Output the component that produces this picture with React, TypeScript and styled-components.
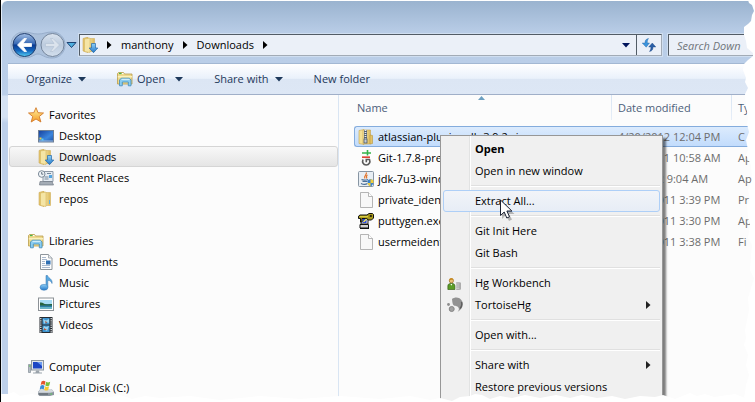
import React from 'react';
import styled, { createGlobalStyle, css } from 'styled-components';

const GlobalStyle = createGlobalStyle`
  * { box-sizing: border-box; }
  html, body { margin: 0; background: #fff; }
  body, button, input, table {
    font-family: "Open Sans", "Noto Sans", sans-serif;
    font-size: 11px;
    line-height: 16px;
  }
  button { border: 0; background: none; padding: 0; margin: 0; color: inherit; text-align: left; }
  svg { display: block; flex: none; }
`;

/* ---------- layout ---------- */

const Screen = styled.div`
  position: relative;
  height: 100vh;
  overflow: hidden;
  padding-top: 1px;
  border-left: 1px solid #000;
`;

const Frame = styled.div`
  display: flex;
  flex-direction: column;
  height: 100%;
  padding-left: 6px;
  border-top-left-radius: 6px;
  border-left: 1px solid #e3edf8;
  background: linear-gradient(#9ab3cf 0, #b9cde7 32px, #bbcfe9 94px, #d5e2f3 95px, #d5e2f3 116px, #bdd0ea 122px);
`;

const NavBar = styled.div`
  display: flex;
  align-items: center;
  padding: 30px 0 4px 2px;
`;

const RoundButtons = styled.div`
  display: flex;
  align-items: center;
  width: 68px;
`;

const PlainButton = styled.button`
  display: flex;
  align-items: center;
  justify-content: center;
`;

const AddressBar = styled.div`
  flex: 1;
  display: flex;
  align-items: center;
  height: 22px;
  margin-left: 1px;
  background: #ebf0f8;
  border: 1px solid #a2abb6;
  border-top-color: #525c66;
  border-left-color: #525c66;
  box-shadow: 0 0 0 1px #cfdef0;
`;

const Crumbs = styled.nav`
  flex: 1;
  display: flex;
  align-items: center;
  gap: 9px;
  padding-left: 2px;
  color: #000;
`;

const Crumb = styled.a`
  color: inherit;
  text-decoration: none;
`;

const Dropdown = styled(PlainButton)`
  width: 20px;
  height: 20px;
`;

const Refresh = styled(PlainButton)`
  width: 25px;
  height: 20px;
  border-left: 1px solid #525c66;
`;

const SearchBox = styled.input`
  width: 87px;
  height: 22px;
  margin-left: 6px;
  padding: 0 0 0 8px;
  border: 1px solid #a2abb6;
  border-top-color: #525c66;
  border-left-color: #525c66;
  border-right: 0;
  border-radius: 0;
  box-shadow: 0 0 0 1px #cfdef0;
  background: #ebf0f8;
  font-style: italic;
  outline: none;
  &::placeholder { color: #6f747a; opacity: 1; }
`;

const Toolbar = styled.div`
  display: flex;
  align-items: center;
  height: 32px;
  padding-left: 18px;
  gap: 31px;
  color: #1e395b;
  border-top: 1px solid #a3b8d3;
  border-bottom: 1px solid #a0afc8;
  background: linear-gradient(#ffffff, #eaf1fb 48%, #dce6f4 50%, #dde7f5);
`;

const ToolButton = styled.button<{ $gap?: number }>`
  display: flex;
  align-items: center;
  gap: ${p => p.$gap ?? 6}px;
  height: 24px;
`;

const ToolLabel = styled.span`
  display: flex;
  align-items: center;
  gap: 4px;
`;

const Body = styled.div`
  flex: 1;
  display: flex;
  min-height: 0;
  background: #fcfcfc;
`;

const Sidebar = styled.nav`
  width: 331px;
  flex: none;
  display: flex;
  flex-direction: column;
  gap: 21px;
  padding-top: 9px;
  border-right: 1px solid #d9e5f3;
  overflow: hidden;
`;

const Group = styled.div`
  display: flex;
  flex-direction: column;
`;

const sideRow = css`
  display: flex;
  align-items: center;
  gap: 5px;
  height: 21px;
  color: #000;
  text-decoration: none;
`;

const GroupLink = styled.a`
  ${sideRow}
  padding-left: 20px;
`;

const SideLink = styled.a<{ $selected?: boolean }>`
  ${sideRow}
  margin-left: 1px;
  padding-left: 28px;
  border: 1px solid transparent;
  border-radius: 3px;
  ${p => p.$selected && css`
    border-color: #d5d5d5;
    background: linear-gradient(#f8f8f8, #e5e5e5);
  `}
`;

const Files = styled.main`
  flex: 1;
  min-width: 0;
  padding-left: 15px;
  overflow: hidden;
`;

const Table = styled.table`
  width: 100%;
  table-layout: fixed;
  border-collapse: separate;
  border-spacing: 0;
`;

const HeadCell = styled.th<{ $width?: number; $indent: number }>`
  width: ${p => (p.$width ? `${p.$width}px` : 'auto')};
  height: 31px;
  padding: 0 0 5px ${p => p.$indent}px;
  font-weight: 400;
  text-align: left;
  color: #4c607a;
  background: ${p =>
    p.$width ? 'linear-gradient(#d9e5f3, #e6eef8) 0 0 / 1px 25px no-repeat' : 'none'};
`;

const Row = styled.tr<{ $selected?: boolean }>`
  td {
    height: 21px;
    border: 1px solid transparent;
    border-width: 1px 0;
    ${p => p.$selected && css`
      border-color: #84acdd;
      background: linear-gradient(#dcebfd, #c2dcfc);
    `}
  }
  td:first-child {
    ${p => p.$selected && css`
      border-left: 1px solid #84acdd;
      border-radius: 3px 0 0 3px;
      padding-left: 3px;
    `}
  }
`;

const NameCell = styled.td`
  padding: 0 0 0 4px;
  color: #000;
  white-space: nowrap;
`;

const FileName = styled.div`
  display: flex;
  align-items: center;
  gap: 4px;
`;

const InfoCell = styled.td`
  padding: 0 0 0 7px;
  color: #6d6d6d;
  white-space: nowrap;
`;

/* ---------- overlays ---------- */

const SortMark = styled.div`
  position: absolute;
  left: 477px;
  top: 96px;
`;

const Menu = styled.div`
  position: absolute;
  left: 439px;
  top: 135px;
  width: 223px;
  padding: 2px 2px 20px;
  border: 1px solid #979797;
  background: linear-gradient(to right, #f0f0f0 28px, #e2e3e3 28px, #e2e3e3 29px, #fff 29px, #fff 30px, #f0f0f0 30px);
  box-shadow: 3px 3px 2px rgba(0, 0, 0, 0.5);
`;

const MenuItem = styled.button<{ $strong?: boolean; $hot?: boolean }>`
  display: flex;
  align-items: center;
  width: 100%;
  height: 22px;
  padding-right: 8px;
  border: 1px solid transparent;
  border-radius: 3px;
  color: #000;
  font-weight: ${p => (p.$strong ? 700 : 400)};
  ${p => p.$hot && css`
    border-color: #aecff7;
    background: linear-gradient(#f2f4f8, #e7edf6);
  `}
`;

const MenuIcon = styled.span`
  width: 31px;
  padding-left: 3px;
`;

const MenuLabel = styled.span`
  flex: 1;
`;

const Separator = styled.div`
  height: 8px;
  margin-left: 28px;
  background: linear-gradient(#e0e0e0, #e0e0e0) 0 3px / 100% 1px no-repeat,
    linear-gradient(#fff, #fff) 0 4px / 100% 1px no-repeat;
`;

const Pointer = styled.div`
  position: absolute;
  left: 498px;
  top: 199px;
`;

const TornRight = styled.div`
  position: absolute;
  top: 0;
  right: 0;
  pointer-events: none;
`;

const TornBottom = styled.div`
  position: absolute;
  bottom: 0;
  left: -1px;
  pointer-events: none;
`;

/* ---------- drawings ---------- */

const DefsSvg = styled.svg`
  position: absolute;
`;

const Icon = ({ children, size = 16 }: { children: React.ReactNode; size?: number }) => (
  <svg width={size} height={size} viewBox="0 0 16 16" aria-hidden="true">{children}</svg>
);

const Caret = ({ color = '#1e395b' }: { color?: string }) => (
  <svg width="8" height="5" viewBox="0 0 8 5" aria-hidden="true"><path d="M0 0h8L4 4.500z" fill={color} /></svg>
);

const RightMark = ({ color = '#000' }: { color?: string }) => (
  <svg width="5" height="8" viewBox="0 0 5 8" aria-hidden="true"><path d="M0 0v8l4.500-4z" fill={color} /></svg>
);

const Gradients = () => (
  <DefsSvg width="0" height="0" aria-hidden="true">
    <defs>
      <linearGradient id="folder" x1="0" x2="1"><stop offset="0" stopColor="#f7e7a6" /><stop offset="1" stopColor="#dcb95c" /></linearGradient>
      <linearGradient id="blue" x1="0" y1="0" x2="0" y2="1"><stop offset="0" stopColor="#8fd0f8" /><stop offset="1" stopColor="#2277c8" /></linearGradient>
      <linearGradient id="screen" x1="0" y1="0" x2="1" y2="1"><stop offset="0" stopColor="#163f9c" /><stop offset=".6" stopColor="#3b86dd" /><stop offset="1" stopColor="#1c4fa5" /></linearGradient>
      <linearGradient id="star" x1="0" y1="0" x2="0" y2="1"><stop offset="0" stopColor="#fff3a0" /><stop offset="1" stopColor="#f59a24" /></linearGradient>
      <linearGradient id="back" x1="0" y1="0" x2="0" y2="1"><stop offset="0" stopColor="#a3bfe4" /><stop offset=".45" stopColor="#3768b4" /><stop offset=".5" stopColor="#0a3a92" /><stop offset=".75" stopColor="#1466bd" /><stop offset="1" stopColor="#58d2f5" /></linearGradient>
      <linearGradient id="fwd" x1="0" y1="0" x2="0" y2="1"><stop offset="0" stopColor="#dbe4ef" /><stop offset=".5" stopColor="#bccbde" /><stop offset="1" stopColor="#d3dfed" /></linearGradient>
    </defs>
  </DefsSvg>
);

const NavButtonsArt = () => (
  <svg width="56" height="28" viewBox="0 0 56 28" aria-hidden="true">
    <path d="M14 1c6 0 8 2 14 2s8-2 14-2c8 0 13 6 13 13s-5 13-13 13-10-4-14-4-6 4-14 4S1 21 1 14 6 1 14 1z" fill="#a8bdd8" opacity=".75" stroke="#8ea5c3" />
    <circle cx="14.500" cy="14" r="11.500" fill="url(#back)" stroke="#233f70" />
    <path d="M7.500 14L14 7.500h2.500L13 12.500h8.500v3H13l3.500 5H14z" fill="#fff" stroke="#fff" strokeWidth=".8" strokeLinejoin="round" />
    <circle cx="42.500" cy="14" r="11.500" fill="url(#fwd)" stroke="#74859c" />
    <path d="M49.500 14L43 7.500h-2.500l3.500 5h-8.500v3H44l-3.500 5H43z" fill="#dbe3ed" stroke="#b0bfd1" strokeWidth=".6" />
  </svg>
);

const FolderBase = () => (
  <>
    <path d="M1 1.500L6 0v15.500L1 14z" fill="#e5c873" stroke="#c49f46" strokeWidth=".5" />
    <path d="M6 1.500h6.500V14.500H6z" fill="url(#folder)" stroke="#cda94e" strokeWidth=".5" />
    <path d="M2.500 2L8 1v14.500l-5.500-1z" fill="#f5e5a5" stroke="#d0ae55" strokeWidth=".5" />
  </>
);

const DownloadsIcon = () => (
  <Icon><FolderBase /><path d="M9.500 6.500h4V11H15.800L11.500 15.700 7.200 11H9.500z" fill="url(#blue)" stroke="#2467a8" strokeWidth=".7" /></Icon>
);
const FolderIcon = () => (
  <Icon><FolderBase /><path d="M11.500 9v4" stroke="#5db2e8" strokeWidth="1" /></Icon>
);
const ZipIcon = () => (
  <Icon>
    <path d="M1 1.500L6 .5v15L1 14.500z" fill="#f3df94" stroke="#c9a54c" strokeWidth=".6" />
    <path d="M5 1h7.500v14H5z" fill="url(#folder)" stroke="#c9a54c" strokeWidth=".6" />
    <path d="M12 6l2.500.5v8L12 15z" fill="#e3c468" stroke="#b8933c" strokeWidth=".6" />
    <path d="M7.500 1v9" stroke="#56606c" strokeWidth="3" />
    <path d="M7.500 1v9" stroke="#e9eef4" strokeWidth="1.800" strokeDasharray="1 1" />
    <rect x="6" y="10" width="3" height="4" fill="#c3ccd6" stroke="#4c5664" strokeWidth=".8" />
  </Icon>
);
const StarIcon = () => (
  <Icon><path d="M8 .7l2 5 5.500.3-4.200 3.500 1.600 5.500L8 12l-4.800 3 1.500-5.500L.5 6l5.300-.3z" fill="url(#star)" stroke="#d37a2a" strokeWidth=".9" /></Icon>
);
const DesktopIcon = () => (
  <Icon>
    <rect x=".5" y="2.500" width="15" height="11.500" fill="url(#screen)" stroke="#6f7f94" />
    <path d="M1 12.500h14v1H1z" fill="#a4bdd8" />
    <path d="M1.500 9.500h2v2h-2z" fill="#e9cf4b" /><path d="M3.500 10.500h2v2h-2z" fill="#5ec8f2" />
  </Icon>
);
const RecentIcon = () => (
  <Icon>
    <path d="M5 1.500h10v10H5z" fill="#e5ecf3" stroke="#8d99a6" />
    <path d="M6.500 7h4M6.500 9h4M9 3.500h4" stroke="#77899b" />
    <path d="M11 5h3v3h-3z" fill="#55a5df" />
    <path d="M2 11.500h12l1.500 3.500h-14z" fill="#a4acb5" stroke="#747d86" strokeWidth=".7" />
    <circle cx="3.700" cy="4" r="3.300" fill="#edf2f6" stroke="#7d8b99" />
    <path d="M3.700 2v2.200h1.600" fill="none" stroke="#48596a" strokeWidth=".8" />
  </Icon>
);
const LibraryIcon = () => (
  <Icon>
    <path d="M.5 2.500l1-1h5l1 1.500h7.500v10H.5z" fill="#eed98c" stroke="#b99d4b" strokeWidth=".8" />
    <path d="M2 2.500h2.500" stroke="#45b649" strokeWidth="1.200" /><path d="M5 2.500h1.500" stroke="#fff" />
    <path d="M.8 5h14.400v1.500H.8z" fill="#fbf1bb" />
    <path d="M2.500 14.800V9l1.800-1.800h8L14 9v5.800h-2.700V11H5.300v3.800z" fill="#8bcdf0" stroke="#3e8abc" strokeWidth=".8" />
    <path d="M4.500 8.300h8" stroke="#dff4fd" />
  </Icon>
);
const DocumentsIcon = () => (
  <Icon>
    <path d="M2.500.5h8L14 4v11.500H2.500z" fill="#fdfdfd" stroke="#8f969c" />
    <path d="M10.500.5V4H14" fill="#e8ebee" stroke="#9aa1a8" strokeWidth=".8" />
    <path d="M4 3.500h4M4 5.500h5M4 7.500h3M4 9.500h3M4 11.500h8M4 13.500h8" stroke="#9fb0c6" strokeWidth=".9" /><path d="M8 6.500h4.500v4H8z" fill="#2f6fb3" />
  </Icon>
);
const PageIcon = () => (
  <Icon><path d="M2.500.5h8L14.500 4.500v11h-12z" fill="#f8f8f8" stroke="#a3a3a3" strokeWidth=".8" /><path d="M10.500.5v4h4" fill="#fff" stroke="#a3a3a3" strokeWidth=".8" /></Icon>
);
const MusicIcon = () => (
  <Icon>
    <path d="M8 .5h1.500c.5 2.500 5.500 3.500 4.500 8-.5-2-2-3-4.200-3.200V12H8z" fill="#5aa9e0" stroke="#2e6eaa" strokeWidth=".5" />
    <ellipse cx="6" cy="12.300" rx="4" ry="3" fill="url(#blue)" stroke="#3978b3" strokeWidth=".5" />
  </Icon>
);
const PicturesIcon = () => (
  <Icon>
    <rect x=".5" y="2" width="15" height="12.500" fill="#fff" stroke="#8c9196" />
    <path d="M2 4h12v4H2z" fill="#a7dcf4" /><path d="M2 8h12v5H2z" fill="#2c7ea6" />
    <path d="M2 6.500c3-.5 4 2 7 2s3-.5 5-.5v1.500H2z" fill="#28643c" /><path d="M2 11h12v2H2z" fill="#69b5c6" />
  </Icon>
);
const VideosIcon = () => (
  <Icon>
    <rect x="1.500" y="0" width="13" height="16" fill="#262b30" />
    <path d="M2.800 1v15M13.200 1v15" stroke="#e7ebee" strokeWidth="1.300" strokeDasharray="1.200 1" />
    <path d="M4.500 1h7v6.500h-7zM4.500 8.500h7V15h-7z" fill="#3d93cf" />
    <path d="M5 2l3 1.500L11 2v4L8 5 6 7zM6 9l2 1 3-1-2 5-4-2z" fill="#98d3ef" /><path d="M7 4l2 1-1 2zM6 11l3 2H6z" fill="#b5573b" />
  </Icon>
);
const ComputerIcon = () => (
  <Icon>
    <path d="M.5 5.500h2v8h-2z" fill="#b5bdc5" stroke="#828c95" strokeWidth=".7" /><path d="M1 7h1.500" stroke="#4fbb49" />
    <rect x="3.500" y="1.500" width="12" height="9.500" fill="#dfe4e9" stroke="#8c959e" />
    <path d="M5 3h9v6.500H5z" fill="#1c45c4" /><path d="M9 3h5v4z" fill="#6e9cf0" />
    <path d="M8 11.500h3l.5 2H14v1H5v-1h2.500z" fill="#9aa3ab" />
  </Icon>
);
const DiskIcon = () => (
  <Icon>
    <path d="M2.500 9h11l2.500 3v3L12 16H1.500L0 14.500V12z" fill="#8b959e" /><path d="M2.500 9h11L16 12l-4 .8H0z" fill="#d3d9de" />
    <path d="M1 14h9" stroke="#545d65" /><path d="M12.500 14h1.500" stroke="#58d758" />
    <path d="M3.500 1.500c1.500-1 2.500-1 4 0L6.700 5c-1.500-1-2.500-1-4 0z" fill="#e5552c" />
    <path d="M8.200 1.800c1.500 1 2.500.8 4 0L11.300 5.500c-1.500 1-2.500.8-4 0z" fill="#78bf3d" />
    <path d="M2.500 5.800c1.500-1 2.500-1 4 0l-.8 3.700c-1.500-1-2.500-1-4 0z" fill="#398bd7" />
    <path d="M7.100 6.200c1.500 1 2.500.8 4 0l-.9 3.700c-1.500 1-2.500.8-4 0z" fill="#f8c92f" />
  </Icon>
);
const GitIcon = () => (
  <Icon>
    <path d="M4 3h9M9.500 0v5.500" stroke="#35b34a" strokeWidth="1.600" />
    <path d="M4 7.200h8" stroke="#dc4437" strokeWidth="1.700" />
    <path d="M5 9.500C4 12 5 15 8.200 15s4.300-3 3.300-5.500H8.300v2.700" fill="none" stroke="#5a5a5a" strokeWidth="1.600" />
  </Icon>
);
const JavaIcon = () => (
  <Icon>
    <rect x=".5" y=".5" width="15" height="15" rx="1" fill="#e8eef4" stroke="#8795a3" />
    <path d="M8 1.500c2 2-3 3.500-1 6M9.500 4c-2.500 1.500 0 2-1 3.500" fill="none" stroke="#e27227" strokeWidth="1.200" />
    <path d="M3.500 8.500c1 .8 5 .8 6.500 0M4.500 10.500h5M3 12.500c2 1 5 1 6.500 0" fill="none" stroke="#4a6f96" strokeWidth="1.100" />
    <path d="M12.500 8l3 1.200c0 3-.5 5-3 6.500-2.500-1.500-3-3.500-3-6.500z" fill="#3d83cc" /><path d="M12.500 8l3 1.200V12h-3zM9.500 12h3v3.700C11 15 10 13.500 9.500 12z" fill="#f1cf3d" />
  </Icon>
);
const PuttyIcon = () => (
  <Icon>
    <path d="M3 5h7v6H3z" fill="#e4e4e4" stroke="#111" strokeWidth=".9" />
    <path d="M4.500 6h4v4h-4z" fill="#2444dc" />
    <path d="M2 11.500h8.500V15H2z" fill="#d0d0d0" stroke="#111" />
    <path d="M2 15.500h9" stroke="#111" />
    <path d="M.5 3.200L2 2h7l2-1.500h3.500l1 1V5L13.500 7H10L9 5.500H4V9H2.500V5.500h-2z" fill="#a99a1c" stroke="#111" strokeWidth="1" />
    <path d="M11.800 2.200h2v1.600h-2z" fill="#111" />
    <path d="M2 3.700h8" stroke="#e6da4c" />
    <path d="M5.500 9l3-3" stroke="#fff04a" strokeWidth="1.200" />
  </Icon>
);
const WorkbenchIcon = () => (
  <Icon size={14}>
    <circle cx="5" cy="5.500" r="2.400" fill="#e7c27a" stroke="#9a6a1b" strokeWidth=".8" /><path d="M2.500 5c0-3.500 5-3.500 5 0L6 4z" fill="#c98a20" />
    <path d="M1 15.500V11.500C1 9.500 2 8.500 5 8.500s4 1 4 3v4z" fill="#5b9d26" stroke="#355f14" strokeWidth=".8" /><path d="M4 9l1 2 1-2z" fill="#fff" />
    <path d="M10.500 8h4M10.500 10.300h4M10.500 12.600h4M10.500 15h4M15 7.500v8" stroke="#777" strokeWidth="1" />
  </Icon>
);
const TortoiseIcon = () => (
  <Icon>
    <path d="M5 2c3-2.500 8-2 10 2 1.800 4 .3 8.500-4.500 11 1.500-2 2-3.500.5-5-1.500-1.500-4-.5-5-2.500-.8-2-.8-4-1-5.500z" fill="#929292" />
    <path d="M13 11.500c1.500-1.500 2.200-4 1.500-6.500" fill="none" stroke="#5e5e5e" strokeWidth="1.400" />
    <circle cx="1.500" cy="7.500" r="1.400" fill="#8c8c8c" /><circle cx="4.700" cy="12" r="2.500" fill="#a2a2a2" stroke="#858585" />
  </Icon>
);
const RefreshIcon = () => (
  <svg width="14" height="14" viewBox="0 0 14 14" aria-hidden="true">
    <path d="M6.500.5C3.500 1 3 3 3 5H.2L4.200 9.200 7.500 5H5.300C5.300 3 5.500 2 6.500.5z" fill="#3c94dc" stroke="#245f9f" strokeWidth=".4" />
    <path d="M7.500 13.500C10.500 13 11 11 11 9h2.800L10.300 5 6.700 9h2.200c0 2-.4 3-1.400 4.500z" fill="#295ea6" stroke="#1c4683" strokeWidth=".4" />
  </svg>
);

/* ---------- data ---------- */

type Place = { name: string; icon: React.ReactNode; selected?: boolean };
const groups: { name: string; icon: React.ReactNode; items: Place[] }[] = [
  { name: 'Favorites', icon: <StarIcon />, items: [
    { name: 'Desktop', icon: <DesktopIcon /> },
    { name: 'Downloads', icon: <DownloadsIcon />, selected: true },
    { name: 'Recent Places', icon: <RecentIcon /> },
    { name: 'repos', icon: <FolderIcon /> },
  ] },
  { name: 'Libraries', icon: <LibraryIcon />, items: [
    { name: 'Documents', icon: <DocumentsIcon /> },
    { name: 'Music', icon: <MusicIcon /> },
    { name: 'Pictures', icon: <PicturesIcon /> },
    { name: 'Videos', icon: <VideosIcon /> },
  ] },
  { name: 'Computer', icon: <ComputerIcon />, items: [
    { name: 'Local Disk (C:)', icon: <DiskIcon /> },
  ] },
];

const files = [
  { name: 'atlassian-plugin-sdk-3.9.2.zip', date: '4/20/2012 12:04 PM', type: 'C', icon: <ZipIcon />, selected: true },
  { name: 'Git-1.7.8-preview.exe', date: '12/6/2011 10:58 AM', type: 'Ap', icon: <GitIcon /> },
  { name: 'jdk-7u3-windows.exe', date: '4/3/2012 9:04 AM', type: 'Ap', icon: <JavaIcon /> },
  { name: 'private_identity', date: '11/18/2011 3:39 PM', type: 'Pr', icon: <PageIcon /> },
  { name: 'puttygen.exe', date: '11/18/2011 3:30 PM', type: 'Ap', icon: <PuttyIcon /> },
  { name: 'usermeidentity', date: '11/18/2011 3:38 PM', type: 'Fi', icon: <PageIcon /> },
];

type Entry = { label: string; strong?: boolean; hot?: boolean; icon?: React.ReactNode; sub?: boolean };
const menu: Entry[][] = [
  [{ label: 'Open', strong: true }, { label: 'Open in new window' }],
  [{ label: 'Extract All...', hot: true }],
  [{ label: 'Git Init Here' }, { label: 'Git Bash' }],
  [{ label: 'Hg Workbench', icon: <WorkbenchIcon /> }, { label: 'TortoiseHg', icon: <TortoiseIcon />, sub: true }],
  [{ label: 'Open with...' }],
  [{ label: 'Share with', sub: true }, { label: 'Restore previous versions' }],
];

export default function App() {
  return (
    <Screen>
      <GlobalStyle />
      <Gradients />
      <Frame>
        <NavBar>
          <RoundButtons>
            <PlainButton aria-label="Back and forward"><NavButtonsArt /></PlainButton>
            <PlainButton aria-label="Recent pages">
              <svg width="11" height="8" viewBox="0 0 11 8" aria-hidden="true"><path d="M1 1.500h9L5.500 6.500z" fill="#4fb0e0" stroke="#1d4273" /></svg>
            </PlainButton>
          </RoundButtons>
          <AddressBar>
            <Crumbs aria-label="Location">
              <DownloadsIcon />
              <RightMark />
              <Crumb href="#manthony">manthony</Crumb>
              <RightMark />
              <Crumb href="#downloads">Downloads</Crumb>
              <RightMark />
            </Crumbs>
            <Dropdown aria-label="Previous locations"><Caret color="#00145c" /></Dropdown>
            <Refresh aria-label="Refresh"><RefreshIcon /></Refresh>
          </AddressBar>
          <SearchBox aria-label="Search Downloads" placeholder="Search Down" />
        </NavBar>
        <Toolbar>
          <ToolButton>Organize <Caret /></ToolButton>
          <ToolButton $gap={10}><ToolLabel><LibraryIcon />Open</ToolLabel><Caret /></ToolButton>
          <ToolButton>Share with <Caret /></ToolButton>
          <ToolButton>New folder</ToolButton>
        </Toolbar>
        <Body>
          <Sidebar aria-label="Folders">
            {groups.map(g => (
              <Group key={g.name}>
                <GroupLink href={`#${g.name}`}>{g.icon}{g.name}</GroupLink>
                {g.items.map(i => (
                  <SideLink key={i.name} href={`#${i.name}`} $selected={i.selected}>{i.icon}{i.name}</SideLink>
                ))}
              </Group>
            ))}
          </Sidebar>
          <Files>
            <Table>
              <thead>
                <tr>
                  <HeadCell $indent={3}>Name</HeadCell>
                  <HeadCell $indent={7} $width={120}>Date modified</HeadCell>
                  <HeadCell $indent={7} $width={24}>Ty</HeadCell>
                </tr>
              </thead>
              <tbody>
                {files.map(f => (
                  <Row key={f.name} $selected={f.selected}>
                    <NameCell><FileName>{f.icon}{f.name}</FileName></NameCell>
                    <InfoCell>{f.date}</InfoCell>
                    <InfoCell>{f.type}</InfoCell>
                  </Row>
                ))}
              </tbody>
            </Table>
          </Files>
        </Body>
      </Frame>
      <SortMark>
        <svg width="7" height="4" viewBox="0 0 7 4" aria-hidden="true"><path d="M0 4l3.500-4L7 4z" fill="#6c9fc0" /></svg>
      </SortMark>
      <Menu role="menu">
        {menu.map((section, n) => (
          <React.Fragment key={n}>
            {n > 0 && <Separator role="separator" />}
            {section.map(e => (
              <MenuItem key={e.label} role="menuitem" $strong={e.strong} $hot={e.hot}>
                <MenuIcon>{e.icon}</MenuIcon>
                <MenuLabel>{e.label}</MenuLabel>
                {e.sub && <RightMark color="#222" />}
              </MenuItem>
            ))}
          </React.Fragment>
        ))}
      </Menu>
      <Pointer>
        <svg width="16" height="22" viewBox="0 0 16 22" aria-hidden="true">
          <path d="M3 3v17l4-4 3 6 3-1.500-3-5.500h5.500z" fill="#000" opacity=".25" />
          <path d="M1.500 1v15.500l3.700-3.500 2.600 6 2.700-1.200-2.600-5.800h5z" fill="#fff" stroke="#1c2233" />
        </svg>
      </Pointer>
      <TornRight>
        <svg width="15" height="402" viewBox="740 0 15 402" aria-hidden="true">
          <path d="M755 0H748L749 3 752 5 754 11 752 15 751 21 748 24 744 27V35L746 41 747 48 753 53V56L748 60 744 64 743 70 746 78 745 82 748 88 745 94 746 105 748 118 747 124 749 132 746 140 748 150 746 155 751 165 752 180 748 190 750 198 747 205 748 218 750 225 748 238 752 245 751 255 750 270 754 278 751 288 748 298 749 310 745 330 746 338 744 345 748 355 746 365 749 375 746 385 745 393 743 402H755z" fill="#fff" />
        </svg>
      </TornRight>
      <TornBottom>
        <svg width="755" height="14" viewBox="0 388 755 14" aria-hidden="true">
          <path d="M0 394L8 394 14 392 20 396 32 394 42 397 60 395 74 397 90 396 105 398 120 395 132 399 145 396 160 398 190 396 220 400 260 396 300 399 340 396 380 399 410 396 430 400 440 398 452 401 460 397 470 396 475 394 482 395 490 399 500 396 512 398 525 395 540 398 556 395 570 398 582 395 597 398 612 396 625 399 640 396 655 397 663 395 675 399 690 393 697 396 705 394 714 397 735 394 745 398 755 400V402H0z" fill="#fff" />
        </svg>
      </TornBottom>
    </Screen>
  );
}
